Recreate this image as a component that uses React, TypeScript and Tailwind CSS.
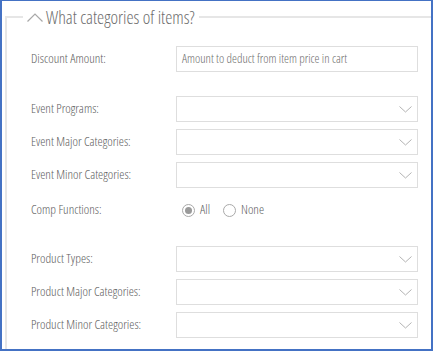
import { ReactNode } from "react";

const FONT = "font-['Open_Sans',sans-serif] [font-stretch:75%] font-light";

function ChevronDown() {
    return (
        <svg width="13" height="7" viewBox="0 0 13 7" className="mr-[5px]">
            <polyline
                points="0.5,0.5 6.5,6 12.5,0.5"
                fill="none"
                stroke="#b3b3b3"
                strokeWidth="1"
            />
        </svg>
    );
}

function ChevronUp() {
    return (
        <svg width="16" height="9" viewBox="0 0 16 9">
            <polyline
                points="0.5,8.5 8,1 15.5,8.5"
                fill="none"
                stroke="#a8a8a8"
                strokeWidth="1.2"
            />
        </svg>
    );
}

function Row({ label, children }: { label: string; children: ReactNode }) {
    return (
        <div className="flex items-center h-[26px]">
            <div className="w-[145px] shrink-0 text-[13px] text-[#5e5e5e]">{label}</div>
            <div className="flex-1 h-full">{children}</div>
        </div>
    );
}

function Select() {
    return (
        <div className="h-full w-[242px] border border-[#dedede] bg-white flex items-center justify-end">
            <ChevronDown />
        </div>
    );
}

function Radio({ label, checked }: { label: string; checked?: boolean }) {
    return (
        <label className="flex items-center gap-[5px] text-[13px] text-[#5e5e5e]">
            <span className="w-[13px] h-[13px] rounded-full border border-[#a9a9a9] flex items-center justify-center">
                {checked && <span className="w-[7px] h-[7px] rounded-full bg-[#9a9a9a]" />}
            </span>
            {label}
        </label>
    );
}

export default function App() {
    return (
        <div className={`w-[434px] h-[351px] bg-white ${FONT}`}>
            <div className="w-[433px] h-[351px] border-[#4472c4] border-l-2 border-r-2 border-b-2 border-t overflow-hidden bg-white">
                <fieldset className="ml-[3px] mt-[6px] w-[460px] h-[400px] border-2 border-[#e6e6e6] pl-[24px]">
                    <legend className="-ml-[8px] px-[4px] flex items-center gap-[3px] text-[18px] leading-[20px] text-[#6e6e6e]">
                        <ChevronUp />
                        <span>What categories of items?</span>
                    </legend>

                    <div className="mt-[19px]">
                        <Row label="Discount Amount:">
                            <div className="h-full w-[242px] border border-[#dedede] flex items-center pl-[5px] text-[12.5px] text-[#6e6e6e]">
                                Amount to deduct from item price in cart
                            </div>
                        </Row>
                    </div>

                    <div className="mt-[24px] flex flex-col gap-[7px]">
                        <Row label="Event Programs:">
                            <Select />
                        </Row>
                        <Row label="Event Major Categories:">
                            <Select />
                        </Row>
                        <Row label="Event Minor Categories:">
                            <Select />
                        </Row>
                    </div>

                    <div className="mt-[9px]">
                        <Row label="Comp Functions:">
                            <div className="h-full flex items-center gap-[13px] pl-[6px]">
                                <Radio label="All" checked />
                                <Radio label="None" />
                            </div>
                        </Row>
                    </div>

                    <div className="mt-[23px] flex flex-col gap-[7px]">
                        <Row label="Product Types:">
                            <Select />
                        </Row>
                        <Row label="Product Major Categories:">
                            <Select />
                        </Row>
                        <Row label="Product Minor Categories:">
                            <Select />
                        </Row>
                    </div>
                </fieldset>
            </div>
        </div>
    );
}
